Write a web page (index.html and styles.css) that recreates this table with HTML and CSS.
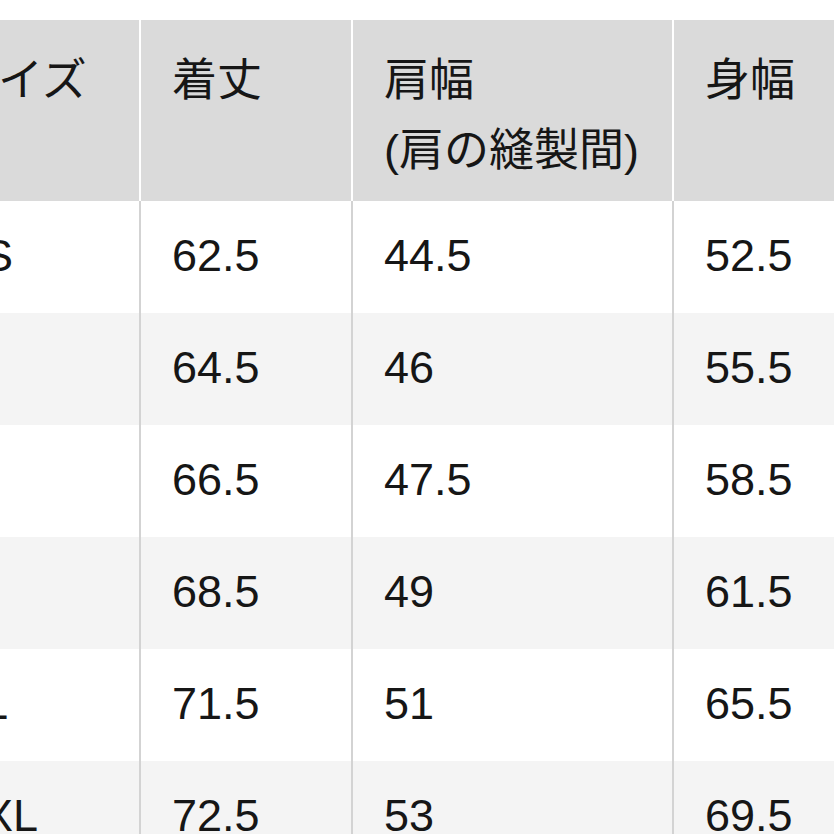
FILE: index.html
```html
<!DOCTYPE html>
<html lang="ja">
<head>
<meta charset="utf-8">
<link rel="stylesheet" href="styles.css">
</head>
<body>
<div class="table">
  <div class="row head">
    <div class="cell">サイズ</div>
    <div class="cell">着丈</div>
    <div class="cell">肩幅<br>(肩の縫製間)</div>
    <div class="cell">身幅</div>
  </div>
  <div class="row">
    <div class="cell">XS</div><div class="cell">62.5</div><div class="cell">44.5</div><div class="cell">52.5</div>
  </div>
  <div class="row alt">
    <div class="cell">S</div><div class="cell">64.5</div><div class="cell">46</div><div class="cell">55.5</div>
  </div>
  <div class="row">
    <div class="cell">M</div><div class="cell">66.5</div><div class="cell">47.5</div><div class="cell">58.5</div>
  </div>
  <div class="row alt">
    <div class="cell">L</div><div class="cell">68.5</div><div class="cell">49</div><div class="cell">61.5</div>
  </div>
  <div class="row">
    <div class="cell">XL</div><div class="cell">71.5</div><div class="cell">51</div><div class="cell">65.5</div>
  </div>
  <div class="row alt">
    <div class="cell">XXL</div><div class="cell">72.5</div><div class="cell">53</div><div class="cell">69.5</div>
  </div>
</div>
</body>
</html>
```
FILE: styles.css
```css
html, body {
  margin: 0;
  padding: 0;
  background: #ffffff;
  overflow: hidden;
}
body {
  width: 834px;
  height: 834px;
  font-family: "Liberation Sans", "Noto Sans CJK JP", sans-serif;
  font-size: 45px;
  color: #161616;
}
.table {
  margin-top: 20px;
  margin-left: -78px;
  width: 1000px;
}
.row {
  display: grid;
  grid-template-columns: 217px 210px 319px 300px;
  column-gap: 2px;
  background: #d3d3d3;
  height: 112px;
}
.row .cell {
  background: #ffffff;
  display: flex;
  align-items: center;
  padding-left: 31px;
  padding-bottom: 2px;
  white-space: nowrap;
}
.row.alt .cell {
  background: #f4f4f4;
}
.row.head {
  background: #ffffff;
  height: 181px;
}
.row.head .cell {
  background: #dadada;
  display: block;
  line-height: 70px;
  padding-top: 26px;
}
```
